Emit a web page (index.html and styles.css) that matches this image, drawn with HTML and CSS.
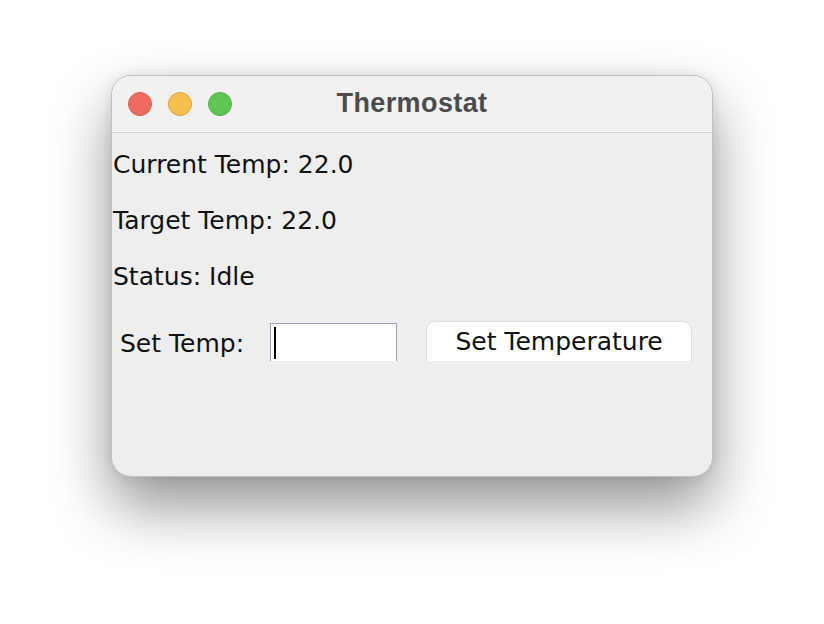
FILE: index.html
```html
<!DOCTYPE html>
<html>
<head>
<meta charset="utf-8">
<link rel="stylesheet" href="styles.css">
</head>
<body>
<div class="window">
  <div class="titlebar">
    <div class="lights">
      <span class="light red"></span>
      <span class="light yellow"></span>
      <span class="light green"></span>
    </div>
    <div class="title">Thermostat</div>
  </div>
  <div class="content">
    <div class="row">Current Temp: 22.0</div>
    <div class="row">Target Temp: 22.0</div>
    <div class="row">Status: Idle</div>
    <div class="row form">
      <span class="label">Set Temp:</span>
      <span class="field"><span class="caret"></span></span>
      <span class="button">Set Temperature</span>
    </div>
  </div>
</div>
</body>
</html>
```
FILE: styles.css
```css
html, body {
  margin: 0;
  padding: 0;
  background: #ffffff;
}
body {
  width: 824px;
  height: 624px;
  padding: 75px 0 0 111px;
  box-sizing: border-box;
  overflow: hidden;
}
.window {
  width: 602px;
  height: 402px;
  box-sizing: border-box;
  border: 1px solid #c0c0c0;
  border-radius: 20px;
  background: #eeeeee;
  box-shadow: 0 30px 60px rgba(0, 0, 0, 0.42), 0 0 12px rgba(0, 0, 0, 0.1);
  overflow: hidden;
  display: flex;
  flex-direction: column;
}
.titlebar {
  height: 57px;
  flex: none;
  box-sizing: border-box;
  border-bottom: 1px solid #d2d2d2;
  background: #f1f1f1;
  position: relative;
  display: flex;
  align-items: center;
}
.lights {
  display: flex;
  gap: 16px;
  padding-left: 16px;
}
.light {
  width: 24px;
  height: 24px;
  border-radius: 50%;
  box-sizing: border-box;
  display: block;
}
.red { background: #ee6a5f; border: 1px solid #d65a4f; }
.yellow { background: #f5bf4f; border: 1px solid #daa43e; }
.green { background: #61c554; border: 1px solid #4fae43; }
.title {
  position: absolute;
  left: 0;
  right: 0;
  top: 0;
  bottom: 0;
  display: flex;
  align-items: center;
  justify-content: center;
  font-family: "Liberation Sans", Arial, sans-serif;
  font-weight: bold;
  font-size: 27px;
  letter-spacing: 0.4px;
  color: #4b4b4b;
  padding-bottom: 1px;
}
.content {
  padding-top: 4px;
  padding-left: 1px;
  font-family: "DejaVu Sans", sans-serif;
  font-size: 25px;
  color: #111111;
}
.row {
  height: 56px;
  line-height: 56px;
  white-space: nowrap;
}
.form {
  line-height: normal;
  display: flex;
  align-items: flex-start;
  padding-top: 17px;
  box-sizing: border-box;
  overflow: hidden;
  height: 56px;
}
.label {
  margin-left: 7px;
  margin-top: 7px;
}
.field {
  margin-left: 26px;
  margin-top: 1px;
  width: 127px;
  height: 44px;
  box-sizing: border-box;
  border: 1px solid #9ba4b6;
  background: #ffffff;
  position: relative;
  flex: none;
}
.caret {
  position: absolute;
  left: 3px;
  top: 3px;
  width: 2px;
  height: 32px;
  background: #000;
}
.button {
  margin-left: 30px;
  width: 264px;
  height: 44px;
  box-sizing: border-box;
  background: #ffffff;
  border-radius: 8px;
  box-shadow: 0 0 0 1px rgba(0, 0, 0, 0.06), 0 1px 1px rgba(0, 0, 0, 0.12);
  text-align: center;
  padding-top: 5px;
  flex: none;
}
```
